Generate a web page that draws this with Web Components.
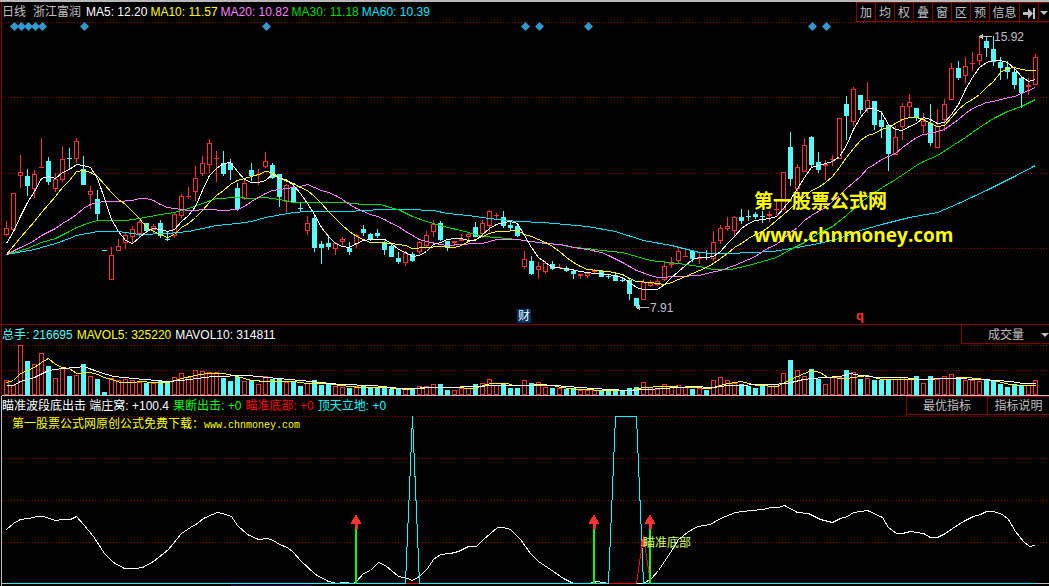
<!DOCTYPE html>
<html lang="zh-CN">
<head>
<meta charset="utf-8">
<title>浙江富润 日线</title>
<style>
  html, body { margin: 0; background: #000; }
  body { font: 12px/18px "Liberation Sans", "Noto Sans CJK SC", sans-serif; color: #c0c0c0; overflow-x: hidden; }
</style>
</head>
<body>
<stock-terminal></stock-terminal>

<script>
const RED = '#ff3232', CYAN = '#54fcfc', GRID = '#900000', STEP = 7, FIRST = 6;

const define = (name, html, setup) => {
  const tpl = document.createElement('template');
  tpl.innerHTML = html;
  customElements.define(name, class extends HTMLElement {
    connectedCallback() {
      if (this.shadowRoot) return;
      const root = this.attachShadow({ mode: 'open' });
      root.append(tpl.content.cloneNode(true));
      if (setup) setup(this, root);
    }
  });
};

/* One item per day: kind (r rising, c falling), high, body top, body bottom, low */
const candles = `r221,228,235,236 r193,193,230,230 r155,172,176,188 c169,176,186,196 r170,174,189,198 r138,167,168,168 c157,161,182,185
r173,179,189,192 r146,159,180,182 c148,158,159,170 r138,141,159,163 c156,169,185,185 r186,191,195,209 c190,199,214,220 c250,250,251,251
r247,255,280,280 r239,246,251,251 r233,235,243,249 r226,229,237,243 r220,222,234,237 c223,223,231,233 r224,226,230,233 c220,223,236,238
c231,239,240,241 r212,214,236,238 r194,196,216,218 r187,196,197,199 r166,178,192,201 r156,163,174,176 r139,143,165,173 r151,158,159,182
c151,163,174,176 c159,163,170,180 c183,188,209,211 r179,183,199,200 c163,170,176,181 r169,174,175,185 r152,161,167,168 c163,165,178,179
c174,174,197,207 r184,185,202,212 c184,187,202,202 c203,208,209,212 r216,223,231,235 c216,218,248,252 c241,244,248,264 c235,243,247,250
r242,243,249,255 r237,239,242,246 c242,248,252,255 r234,235,244,248 c225,229,233,236 c233,234,239,241 c229,233,236,238 c241,242,250,255
c244,246,257,257 c252,258,262,264 r251,253,263,266 c252,254,261,262 r241,242,252,254 r231,235,246,248 r220,224,232,237 c221,223,240,241
c241,241,248,251 r241,241,243,246 r234,239,241,241 r233,234,237,242 c222,227,237,237 r220,223,234,238 r210,211,226,232 r213,215,216,219
c211,217,226,228 c222,225,228,230 c224,226,236,237 r251,259,267,269 c256,261,274,275 r262,266,270,279 r261,263,272,274 c261,264,269,270
r264,267,268,269 c266,268,271,272 c269,271,274,279 r274,274,276,279 r272,273,276,278 r269,270,272,274 c270,271,277,277 c275,276,277,279
c274,275,281,281 c278,280,281,282 c278,280,294,300 c298,298,306,308 r279,282,300,300 r280,283,286,287 r279,281,285,286 r262,266,280,281
r257,263,265,268 r248,251,261,264 r248,256,257,257 c251,251,259,262 r253,257,259,264 c250,257,258,260 r231,242,259,261 r225,228,241,244
r217,226,229,231 r216,217,231,236 c209,217,221,224 c210,216,217,221 c212,214,217,219 c211,216,217,223 r211,214,216,222 r199,209,210,215
r172,172,210,210 c132,147,179,186 r164,167,189,192 r138,145,172,172 c136,137,165,167 c152,162,170,173 r160,164,166,180 r155,159,160,166
r118,118,159,159 c96,104,116,140 r87,89,122,126 c95,95,110,114 r82,100,109,113 c101,101,125,130 c111,120,127,138 c124,125,154,171
r126,137,155,155 r103,106,127,140 r94,102,107,117 c108,108,118,121 r113,121,126,133 c104,123,143,146 r109,126,148,148 r99,104,120,131
r63,68,100,100 c61,68,78,80 r57,66,76,83 r52,63,64,71 r36,54,61,65 c36,41,48,57 c36,49,62,66 c57,62,68,80 c61,67,72,79 c68,72,85,89
c76,78,93,108 r78,85,87,95 r54,57,85,85`.trim().split(/\s+/).map(s => [s[0], ...s.slice(1).split(',').map(Number)]);

const volumes = [380,385,345,361,364,353,366,378,368,376,375,364,376,379,392,378,380,379,380,382,383,383,381,383,377,373,377,370,371,372,372,
378,381,377,381,380,384,376,379,379,382,382,386,383,380,385,384,386,387,388,386,386,388,388,388,389,389,389,389,386,386,384,384,390,390,388,
388,384,383,379,385,383,388,388,380,383,382,387,388,388,389,388,390,390,390,391,391,391,391,388,387,382,387,389,384,387,385,387,389,388,390,
380,377,380,383,384,386,388,385,386,384,373,360,370,376,369,379,384,377,377,370,372,379,378,380,380,379,379,377,379,376,383,376,379,376,374,
378,380,380,381,380,381,384,387,385,385,385,380];

const averages = {
  '#00e4f8': '6,254 34,249 55,243 69,238 76,235 97,231 118,231 139,234 167,233 188,231 216,225 237,223 251,221 265,217 293,212 307,211 349,211 363,210 383,209 407,209 433,210 447,213 468,215 489,218 517,221 543,222 587,226 615,231 643,240 671,245 699,252 713,253 730,253 750,252 773,251 797,247 818,243 839,238 860,230 881,224 909,217 937,212 958,203 986,190 1014,176 1035,165',
  '#00dc00': '6,254 27,248 41,242 55,238 69,231 76,227 90,222 97,220 125,220 139,218 160,214 174,212 188,208 202,203 216,198 237,197 251,198 265,197 279,199 293,202 343,202 363,204 380,204 400,210 412,216 426,221 447,227 461,230 475,234 482,236 496,237 517,239 538,242 559,244 573,247 587,248 601,250 622,252 629,254 636,256 650,260 678,263 699,266 713,269 730,269 748,265 762,261 769,259 776,257 790,249 804,242 818,233 832,226 846,215 860,202 874,192 895,179 916,165 923,161 930,158 937,155 951,146 965,137 979,127 993,118 1007,111 1021,106 1035,99',
  '#ff80ff': '6,254 20,247 27,244 34,240 41,235 55,228 62,223 69,219 76,214 83,208 90,204 97,202 104,201 118,201 132,200 139,198 146,198 153,200 160,204 167,207 181,209 188,210 209,209 223,210 237,209 244,206 251,201 258,197 265,193 272,190 286,188 300,186 307,184 314,187 321,190 328,192 335,195 342,199 349,204 356,208 363,211 370,214 377,216 384,219 391,223 398,226 405,231 412,235 419,239 426,241 440,244 447,245 461,244 475,243 482,243 489,241 496,239 517,239 531,241 545,243 559,244 566,245 573,247 587,249 601,252 608,255 622,262 636,270 650,275 657,277 678,276 699,275 706,273 720,270 734,265 741,262 748,259 755,256 762,251 769,247 776,244 783,238 790,232 797,227 804,220 811,215 818,211 825,207 832,201 839,195 846,188 853,182 860,176 867,168 874,164 881,159 895,153 902,147 909,142 916,137 923,134 930,133 944,129 951,124 958,119 965,113 972,108 979,105 986,102 993,101 1000,99 1014,96 1021,93 1028,90 1035,87',
  '#ffff00': '6,254 20,237 34,221 41,212 48,204 55,196 62,187 69,180 76,171 83,170 90,172 97,176 104,184 111,192 118,199 125,204 132,211 139,218 146,227 153,231 160,234 167,237 174,234 181,227 188,223 195,217 202,210 209,202 216,195 223,190 230,184 237,180 251,176 258,174 265,171 272,172 279,178 293,183 300,187 307,190 314,196 321,203 328,211 335,218 342,225 349,231 356,236 363,239 370,242 377,242 391,243 405,245 412,248 426,247 440,246 454,247 461,245 468,241 475,239 482,236 489,233 496,231 503,231 517,230 524,234 531,236 538,239 545,242 552,246 559,251 566,257 573,262 580,266 587,269 608,271 622,274 629,278 636,281 650,282 664,284 671,282 678,279 685,276 692,273 699,270 706,267 713,263 720,258 727,253 734,247 741,243 748,238 755,234 762,231 769,226 776,220 783,214 790,208 804,196 811,190 818,187 825,182 832,176 839,167 846,157 853,148 860,140 867,135 874,133 881,129 888,127 895,123 902,119 909,117 916,117 923,119 930,123 937,126 944,125 951,117 958,109 965,103 972,99 979,94 986,87 993,81 1000,72 1007,68 1014,67 1021,69 1028,70 1035,70',
  '#ffffff': '6,243 13,231 20,216 27,202 34,191 41,178 48,176 55,178 62,172 69,169 76,164 83,165 90,167 97,178 104,198 111,219 118,231 125,240 132,243 139,237 146,231 153,228 160,229 167,231 174,229 181,221 188,215 195,206 202,190 209,175 216,168 223,163 230,162 237,171 244,179 251,182 258,182 265,180 272,174 279,178 286,179 293,185 300,193 307,203 314,214 321,227 328,236 335,243 342,246 349,247 356,243 363,240 370,239 384,239 391,243 398,249 405,252 412,256 419,255 426,251 433,244 440,242 447,239 454,238 461,238 468,240 475,240 482,234 489,228 496,224 503,222 510,221 517,223 524,235 531,247 538,257 545,262 552,267 566,268 580,271 594,273 608,274 622,277 629,282 636,287 643,289 657,289 664,284 671,277 678,271 685,265 692,259 699,257 706,257 713,256 720,251 727,243 734,236 741,228 748,223 755,220 769,218 776,216 783,208 790,199 797,188 804,177 811,167 818,165 825,163 832,161 839,156 846,145 853,129 860,117 867,108 874,108 881,112 888,124 895,129 902,130 909,126 916,123 923,117 930,119 937,123 944,122 951,114 958,104 965,89 972,77 979,67 986,62 993,60 1000,60 1007,62 1014,68 1021,76 1028,81 1035,79'
};

const volumeAverages = {
  '#ffff00': '6,382 13,380 20,373 27,370 34,367 41,362 48,358 55,364 62,367 69,368 76,373 90,372 97,374 104,377 111,379 120,382 133,382 140,381 153,382 168,382 181,378 195,375 207,373 223,373 237,376 251,380 267,381 293,381 307,383 327,383 340,385 360,387 383,387 407,389 430,387 453,387 473,388 490,383 507,383 513,385 533,385 553,385 560,387 580,389 607,390 630,390 643,387 663,386 692,387 710,388 723,384 740,381 757,385 777,386 790,379 797,376 811,370 820,372 827,377 846,378 867,375 881,379 917,379 944,378 967,377 993,380 1010,384 1023,385 1035,385',
  '#ffffff': '6,385 13,385 20,381 34,377 48,370 62,368 76,367 83,366 100,372 113,376 133,378 167,381 180,380 213,376 247,375 267,377 300,380 340,384 373,385 400,388 440,387 480,386 490,385 527,385 540,384 553,385 567,386 593,388 627,390 647,389 692,386 713,387 727,385 770,384 787,383 803,379 823,377 840,376 850,373 860,375 877,377 903,377 920,379 950,378 983,379 1010,381 1023,383 1035,383'
};

const wave = '6,529 13,523 20,519 28,518 37,516 43,516 55,520 62,519 70,519 76,516 83,524 93,536 104,553 113,562 124,568 135,568 142,567 153,561 168,549 181,533 190,527 197,523 203,518 212,514 217,512 222,513 231,516 237,525 247,534 258,539 267,538 273,540 279,544 287,547 293,552 300,560 315,574 328,581 337,583 343,582 353,583 356,581 363,573 370,570 378,562 385,565 398,576 407,578 412,580 419,576 427,568 433,559 440,554 450,553 458,551 468,546 476,546 483,539 497,527 503,527 510,529 520,539 530,553 538,561 550,569 563,578 573,583 589,583 597,581 608,583 643,583 651,578 658,570 670,552 678,539 687,532 697,526 710,524 720,518 735,512 750,510 763,509 770,507 778,507 784,505 797,512 808,513 820,519 832,522 840,518 847,516 853,512 867,510 882,517 888,527 896,533 902,533 910,531 923,533 930,537 937,537 945,533 952,528 963,521 973,516 980,514 986,511 993,511 1002,514 1008,519 1015,531 1023,541 1029,546 1035,545';

const rect = (x, y, w, h, c) => `<rect x="${x}" y="${y}" width="${w}" height="${h}" fill="${c}"/>`;
const line = (pts, c) => `<polyline transform="translate(.5 .5)" points="${pts}" fill="none" stroke="${c}"/>`;
const grid = ys => ys.map(y => `<path d="M2 ${y}.5H1049" stroke="${GRID}" stroke-dasharray="1 2"/>`).join('');
const hollow = (x, y, b) => b - y < 3 ? rect(x - 2, y, 5, b - y, RED)
  : `<rect x="${x - 1.5}" y="${y + .5}" width="4" height="${b - y - 1}" fill="#000" stroke="${RED}"/>`;
const upArrow = x => rect(x - 1, 529, 2, 55, '#00ff00') +
  `<path d="M${x} 514l5 9v1h-3v5h-3v-5h-4v-1z" fill="${RED}"/>`;

const plots = {
  price: { top: 22, height: 302, draw: () =>
    grid([22, 97, 173, 248]) +
    candles.map(([k, h, t, b, l], i) => {
      const x = FIRST + i * STEP, c = k === 'r' ? RED : CYAN;
      return rect(x, h, 1, Math.max(l - h, 1), c) + (k === 'r' ? hollow(x, t, b) : rect(x - 2, t, 5, b - t, c));
    }).join('') +
    Object.entries(averages).map(([c, p]) => line(p, c)).join('') +
    [14, 21, 28, 35, 42, 84, 266, 525, 539, 588, 812, 826]
      .map(x => `<path d="M${x}.5 22l4.500 4.500-4.500 4.500-4.500-4.500z" fill="#3399cc" shape-rendering="auto"/>`).join('') +
    '<path d="M979 36.5h13M636 307.5h13" stroke="#c0c0c0"/><path d="M979 36.5l4-3v6zM636 307.500l4-3v6z" fill="#c0c0c0"/>' },
  volume: { top: 344, height: 51, draw: () =>
    grid([345, 370]) +
    volumes.map((y, i) => {
      const x = FIRST + i * STEP;
      return candles[i][0] === 'r' ? hollow(x, y, 395) : rect(x - 2, y, 5, 395 - y, CYAN);
    }).join('') +
    Object.entries(volumeAverages).map(([c, p]) => line(p, c)).join('') },
  signal: { top: 415, height: 171, draw: () =>
    grid([416, 458, 500, 542]) +
    line(wave, '#ffffff') +
    line('6,583 405,583 412,416 419,583 608,583 615,416 636,416 643,583 1035,583', '#00ffff') +
    rect(2, 583, 4, 1, '#c0c0c0') + rect(6, 583, 1029, 1, '#00ffff') + rect(1035, 583, 14, 1, '#c0c0c0') +
    rect(406, 583, 13, 1, '#ff0000') + rect(609, 583, 27, 1, '#ff0000') + rect(637, 583, 6, 1, '#ffffff') +
    line('636,583 643,535 650,583', '#ff0000') +
    '<ellipse cx="644" cy="543" rx="3" ry="4" fill="#ff3232"/>' +
    [356, 594, 650].map(upArrow).join('') + rect(231, 585, 81, 1, '#300060') }
};

define('chart-plot', `
  <style>
    :host { display: block; position: relative; }
    svg { display: block; width: 100%; overflow: hidden; }
  </style>
  <svg preserveAspectRatio="none" shape-rendering="crispEdges" aria-hidden="true"></svg>
  <slot></slot>`,
  (el, root) => {
    const p = plots[el.getAttribute('kind')], svg = root.querySelector('svg');
    svg.setAttribute('viewBox', `2 ${p.top} 1047 ${p.height}`);
    svg.style.height = p.height + 'px';
    svg.innerHTML = p.draw();
  });

/* Text pinned to a data point; x and y are in the plot's own units */
define('chart-note', `
  <style>
    :host { position: absolute; white-space: nowrap; transform: translateY(-50%); }
  </style>
  <slot></slot>`,
  el => {
    const top = plots[el.parentElement.getAttribute('kind')].top;
    el.style.left = `calc(${el.getAttribute('x') - 2} / 1047 * 100%)`;
    el.style.top = el.getAttribute('y') - top + 'px';
  });

define('chart-panel', `
  <style>
    :host { display: block; margin-left: 1px; border-left: 1px solid var(--side, #800000); }
    header { display: flex; justify-content: space-between; height: var(--bar, 19px); }
    .body { border-bottom: var(--base, 0 none); }
  </style>
  <header><slot name="legend"></slot><slot name="tools"></slot></header>
  <div class="body"><slot></slot></div>`);

define('legend-bar', `
  <style>
    :host { display: flex; align-items: center; gap: 4px; white-space: nowrap; line-height: 18px; }
  </style>
  <slot></slot>`);

define('legend-item', `
  <style>:host { display: block; color: var(--tone); }</style>
  <slot></slot>`,
  el => el.style.setProperty('--tone', el.getAttribute('tone')));

define('tool-strip', `
  <style>:host { display: flex; align-items: stretch; }</style>
  <slot></slot>`);

define('tool-button', `
  <style>
    :host { display: flex; box-sizing: border-box; width: var(--w, 19px); border: 1px solid #800000; border-right: 0; overflow: hidden; }
    button { all: unset; flex: 1; display: flex; align-items: center; justify-content: center; white-space: nowrap; line-height: 18px; padding-top: var(--drop, 0); cursor: pointer; }
  </style>
  <button type="button"><slot></slot></button>`,
  (el, root) => {
    if (el.hasAttribute('label')) root.querySelector('button').setAttribute('aria-label', el.getAttribute('label'));
  });

define('indicator-select', `
  <style>
    :host { display: flex; position: relative; box-sizing: border-box; width: 88px; border: solid #800000; border-width: 0 0 1px 1px; }
    select { appearance: none; flex: 1; min-width: 0; margin: 0; border: 0; padding: 2px 0 0 26px; background: #000; color: inherit; font: inherit; line-height: 16px; outline: 0; }
    svg { position: absolute; right: 0; top: 8px; pointer-events: none; }
  </style>
  <select aria-label="副图指标"><option>成交量</option></select>
  <svg width="8" height="4" aria-hidden="true"><path d="M0 0h8L4 4z" fill="#c0c0c0"/></svg>`);

define('stock-terminal', `
  <style>
    :host { display: block; border-top: 2px solid #b8b8b8; }
    .price { --bar: 20px; --base: 1px solid #900000; }
    .volume { --base: 1px solid #c0c0c0; }
    .signal { --side: #c0c0c0; }
    .price legend-bar { gap: 3px; }
    .stock { padding: 0 2px 0 4px; }
    .price tool-strip { --drop: 2px; }
    .wide { --w: 30px; }
    .edge { --w: 11px; }
    .best { --w: 81px; }
    .help { --w: 62px; }
    .mark { background: #003366; color: #fff; line-height: 14px; padding: 0 1px; }
    .info { color: #ff3232; font-weight: bold; font-size: 13px; }
    .brand { color: #ffff00; font: bold 19px/24px "Noto Sans CJK SC", sans-serif; }
    .site { color: #ffff00; font: bold 19px/24px "Open Sans", sans-serif; }
    .promo { color: #ffff00; }
    .promo a { color: inherit; text-decoration: none; font: 10px "Liberation Mono", monospace; }
    .signal-tag { color: #d0ff60; }
  </style>
  <chart-panel class="price">
    <legend-bar slot="legend">
      <legend-item tone="#c0c0c0">日线</legend-item>
      <legend-item class="stock" tone="#c0c0c0">浙江富润</legend-item>
      <legend-item tone="#ffffff">MA5: 12.20</legend-item>
      <legend-item tone="#ffff00">MA10: 11.57</legend-item>
      <legend-item tone="#ff80ff">MA20: 10.82</legend-item>
      <legend-item tone="#00dc00">MA30: 11.18</legend-item>
      <legend-item tone="#00e4f8">MA60: 10.39</legend-item>
    </legend-bar>
    <tool-strip slot="tools">
      <tool-button>加</tool-button><tool-button>均</tool-button><tool-button>权</tool-button><tool-button>叠</tool-button><tool-button>窗</tool-button><tool-button>区</tool-button><tool-button>预</tool-button>
      <tool-button class="wide">信息</tool-button>
      <tool-button label="移到最新"><svg width="14" height="13"><path d="M1 5h5V1l5 5.500L6 12V8H1zM11 1h2v11h-2z" fill="#c0c0c0"/></svg></tool-button>
      <tool-button class="edge" label="更多"><svg width="8" height="4"><path d="M0 0h8L4 4z" fill="#c0c0c0"/></svg></tool-button>
    </tool-strip>
    <chart-plot kind="price">
      <chart-note x="994" y="37">15.92</chart-note>
      <chart-note x="650" y="308">7.91</chart-note>
      <chart-note class="brand" x="754" y="200">第一股票公式网</chart-note>
      <chart-note class="site" x="754" y="235">www.chnmoney.com</chart-note>
      <chart-note class="mark" x="517" y="316">财</chart-note>
      <chart-note class="info" x="856" y="316">q</chart-note>
    </chart-plot>
  </chart-panel>
  <chart-panel class="volume">
    <legend-bar slot="legend">
      <legend-item tone="#54fcfc">总手: 216695</legend-item>
      <legend-item tone="#ffff00">MAVOL5: 325220</legend-item>
      <legend-item tone="#ffffff">MAVOL10: 314811</legend-item>
    </legend-bar>
    <indicator-select slot="tools"></indicator-select>
    <chart-plot kind="volume"></chart-plot>
  </chart-panel>
  <chart-panel class="signal">
    <legend-bar slot="legend">
      <legend-item tone="#ffffff">瞄准波段底出击 端庄窝: +100.4</legend-item>
      <legend-item tone="#00ff00">果断出击: +0</legend-item>
      <legend-item tone="#ff0000">瞄准底部: +0</legend-item>
      <legend-item tone="#00ffff">顶天立地: +0</legend-item>
    </legend-bar>
    <tool-strip slot="tools">
      <tool-button class="best">最优指标</tool-button>
      <tool-button class="help">指标说明</tool-button>
    </tool-strip>
    <chart-plot kind="signal">
      <chart-note class="promo" x="12" y="424">第一股票公式网原创公式免费下载：<a href="#">www.chnmoney.com</a></chart-note>
      <chart-note class="signal-tag" x="643" y="543">瞄准底部</chart-note>
    </chart-plot>
  </chart-panel>`);
</script>
</body>
</html>
